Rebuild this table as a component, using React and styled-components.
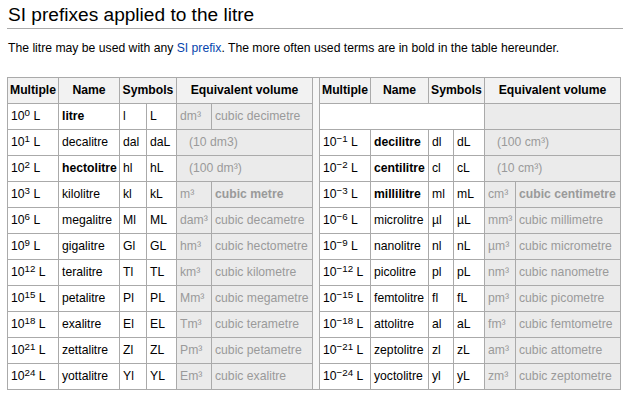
import React from "react";
import { styled, createGlobalStyle } from "styled-components";

const GlobalStyle = createGlobalStyle`
  body {
    margin: 0;
    background: #fff;
    color: #000;
    font-family: "Liberation Sans", Arial, sans-serif;
  }
`;

const Page = styled.div`
  padding-left: 7px;
`;

const Title = styled.h2`
  margin: 0;
  padding: 3px 0 1px 1px;
  font-size: 19.1px;
  font-weight: normal;
  line-height: 1.25;
  border-bottom: 1px solid #aaa;
`;

const Intro = styled.p`
  margin: 10px 0 19px 1px;
  font-size: 12.2px;
  line-height: 19px;
`;

const Link = styled.a`
  color: #0645ad;
  text-decoration: none;
`;

const Table = styled.table`
  border-collapse: collapse;
  table-layout: fixed;
  width: 614px;
  font-size: 12.2px;
  border: 1px solid #aaa;
`;

const Th = styled.th`
  height: 25px;
  padding: 0 2px;
  background: #f2f2f2;
  border: 1px solid #aaa;
  font-weight: bold;
  text-align: center;
  white-space: nowrap;
`;

const Td = styled.td`
  height: 25px;
  padding: 0 0 0 ${(p) => (p.$indent ? "12px" : "3px")};
  border: 1px solid #aaa;
  white-space: nowrap;
  overflow: hidden;
  background: ${(p) => (p.$equiv ? "#ebebeb" : "#fff")};
  color: ${(p) => (p.$equiv ? "#9a9a9a" : "#000")};
  font-weight: ${(p) => (p.$bold ? "bold" : "normal")};
`;

const Gap = styled.td`
  padding: 0;
  background: #f7f7f7;
  border: 1px solid #aaa;
`;

const Sup = styled.sup`
  font-size: 0.8em;
  line-height: 0;
  vertical-align: 0.4em;
`;

const widths = [51, 61, 27, 30, 35, 101, 7, 51, 58, 25, 31, 31, 105];

const left = [
  { p: "0", name: "litre", bold: true, s1: "l", s2: "L", u: "dm³", v: "cubic decimetre" },
  { p: "1", name: "decalitre", s1: "dal", s2: "daL", note: "(10 dm3)" },
  { p: "2", name: "hectolitre", bold: true, s1: "hl", s2: "hL", note: "(100 dm³)" },
  { p: "3", name: "kilolitre", s1: "kl", s2: "kL", u: "m³", v: "cubic metre", vBold: true },
  { p: "6", name: "megalitre", s1: "Ml", s2: "ML", u: "dam³", v: "cubic decametre" },
  { p: "9", name: "gigalitre", s1: "Gl", s2: "GL", u: "hm³", v: "cubic hectometre" },
  { p: "12", name: "teralitre", s1: "Tl", s2: "TL", u: "km³", v: "cubic kilometre" },
  { p: "15", name: "petalitre", s1: "Pl", s2: "PL", u: "Mm³", v: "cubic megametre" },
  { p: "18", name: "exalitre", s1: "El", s2: "EL", u: "Tm³", v: "cubic terametre" },
  { p: "21", name: "zettalitre", s1: "Zl", s2: "ZL", u: "Pm³", v: "cubic petametre" },
  { p: "24", name: "yottalitre", s1: "Yl", s2: "YL", u: "Em³", v: "cubic exalitre" },
];

const right = [
  null,
  { p: "−1", name: "decilitre", bold: true, s1: "dl", s2: "dL", note: "(100 cm³)" },
  { p: "−2", name: "centilitre", bold: true, s1: "cl", s2: "cL", note: "(10 cm³)" },
  { p: "−3", name: "millilitre", bold: true, s1: "ml", s2: "mL", u: "cm³", v: "cubic centimetre", vBold: true },
  { p: "−6", name: "microlitre", s1: "µl", s2: "µL", u: "mm³", v: "cubic millimetre" },
  { p: "−9", name: "nanolitre", s1: "nl", s2: "nL", u: "µm³", v: "cubic micrometre" },
  { p: "−12", name: "picolitre", s1: "pl", s2: "pL", u: "nm³", v: "cubic nanometre" },
  { p: "−15", name: "femtolitre", s1: "fl", s2: "fL", u: "pm³", v: "cubic picometre" },
  { p: "−18", name: "attolitre", s1: "al", s2: "aL", u: "fm³", v: "cubic femtometre" },
  { p: "−21", name: "zeptolitre", s1: "zl", s2: "zL", u: "am³", v: "cubic attometre" },
  { p: "−24", name: "yoctolitre", s1: "yl", s2: "yL", u: "zm³", v: "cubic zeptometre" },
];

function HeaderCells() {
  return (
    <>
      <Th>Multiple</Th>
      <Th>Name</Th>
      <Th colSpan={2}>Symbols</Th>
      <Th colSpan={2}>Equivalent volume</Th>
    </>
  );
}

function PrefixCells({ row }) {
  if (!row) {
    return (
      <>
        <Td colSpan={4} />
        <Td colSpan={2} $equiv />
      </>
    );
  }
  return (
    <>
      <Td>
        10<Sup>{row.p}</Sup> L
      </Td>
      <Td $bold={row.bold}>{row.name}</Td>
      <Td>{row.s1}</Td>
      <Td>{row.s2}</Td>
      {row.note ? (
        <Td colSpan={2} $equiv $indent>
          {row.note}
        </Td>
      ) : (
        <>
          <Td $equiv>{row.u}</Td>
          <Td $equiv $bold={row.vBold}>
            {row.v}
          </Td>
        </>
      )}
    </>
  );
}

export default function App() {
  return (
    <Page>
      <GlobalStyle />
      <Title>SI prefixes applied to the litre</Title>
      <Intro>
        The litre may be used with any <Link href="#">SI prefix</Link>. The more often used
        terms are in bold in the table hereunder.
      </Intro>
      <Table>
        <colgroup>
          {widths.map((w, i) => (
            <col key={i} style={{ width: w }} />
          ))}
        </colgroup>
        <tbody>
          <tr>
            <HeaderCells />
            <Gap rowSpan={12} />
            <HeaderCells />
          </tr>
          {left.map((row, i) => (
            <tr key={i}>
              <PrefixCells row={row} />
              <PrefixCells row={right[i]} />
            </tr>
          ))}
        </tbody>
      </Table>
    </Page>
  );
}
